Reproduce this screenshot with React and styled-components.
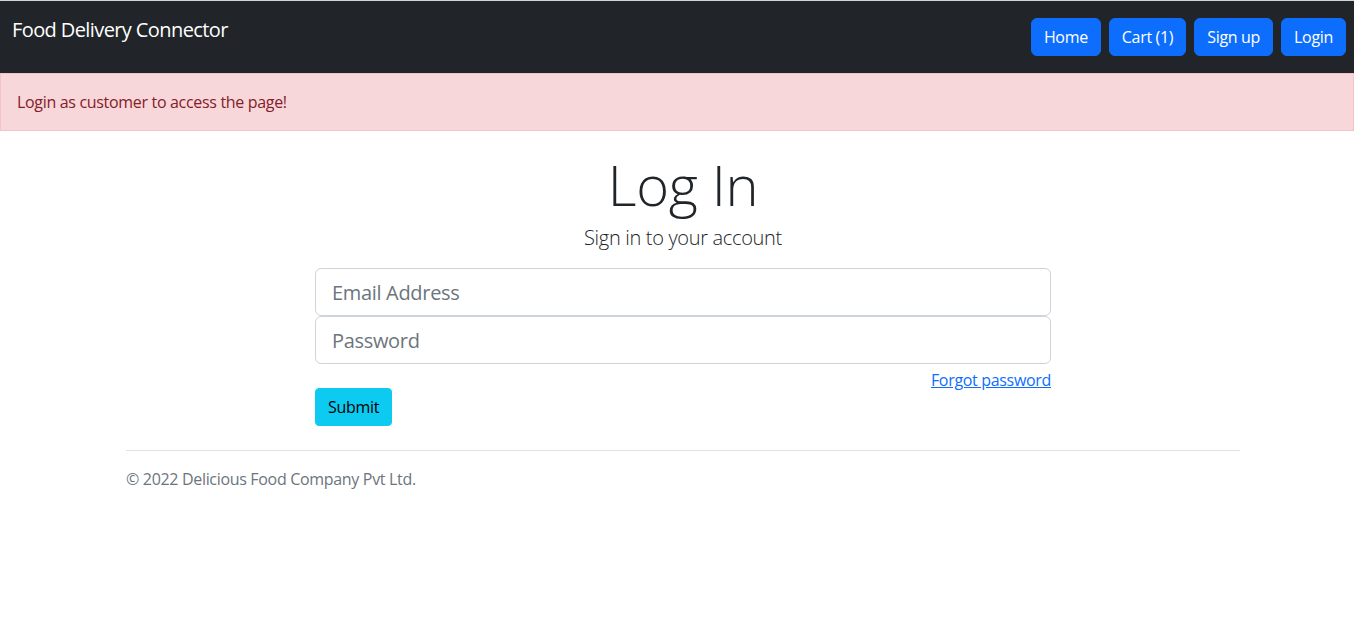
import React from "react";
import styled, { createGlobalStyle } from "styled-components";

const GlobalStyle = createGlobalStyle`
  body {
    margin: 0;
    font-family: "Open Sans", "Noto Sans", sans-serif;
    letter-spacing: -0.02em;
    color: #212529;
    background: #fff;
    border-top: 1px solid #d4d4d4;
  }
  * { box-sizing: border-box; }
`;

const Navbar = styled.nav`
  background-color: #212529;
  height: 72px;
  display: flex;
  justify-content: space-between;
  align-items: flex-start;
  padding: 0 8px 0 12px;
`;

const Brand = styled.a`
  color: #fff;
  font-size: 20px;
  line-height: 30px;
  margin-top: 14px;
  letter-spacing: -0.03em;
  text-decoration: none;
`;

const NavButtons = styled.div`
  display: flex;
  gap: 8px;
  margin-top: 17px;
`;

const NavButton = styled.button`
  background-color: #0d6efd;
  color: #fff;
  border: 1px solid #0d6efd;
  border-radius: 6px;
  font-family: inherit;
  letter-spacing: inherit;
  font-size: 16px;
  line-height: 24px;
  padding: 6px 12px;
`;

const Alert = styled.div`
  background-color: #f8d7da;
  border: 1px solid #f5c2c7;
  color: #842029;
  padding: 16px;
  font-size: 16px;
  line-height: 24px;
`;

const Main = styled.main`
  display: flex;
  flex-direction: column;
  align-items: center;
  padding: 20px 0 0 12px;
`;

const Title = styled.h1`
  font-size: 56px;
  font-weight: 300;
  line-height: 67px;
  margin: 0 0 5px;
`;

const Lead = styled.p`
  font-size: 20px;
  font-weight: 300;
  line-height: 30px;
  margin: 0 0 15px;
`;

const Form = styled.form`
  width: 736px;
  display: flex;
  flex-direction: column;
`;

const Input = styled.input`
  width: 100%;
  height: 48px;
  font-family: inherit;
  letter-spacing: inherit;
  font-size: 20px;
  padding: 8px 16px;
  border: 1px solid #ced4da;
  border-radius: 6px;
  color: #212529;
  &::placeholder { color: #6c757d; }
`;

const ForgotRow = styled.div`
  display: flex;
  justify-content: flex-end;
  margin-top: 8px;
`;

const Link = styled.a`
  color: #0d6efd;
  font-size: 16px;
  line-height: 16px;
  text-decoration: underline;
`;

const Submit = styled.button`
  align-self: flex-start;
  background-color: #0dcaf0;
  border: 1px solid #0dcaf0;
  border-radius: 4px;
  color: #000;
  font-family: inherit;
  letter-spacing: inherit;
  font-size: 16px;
  line-height: 24px;
  padding: 6px 12px;
`;

const Footer = styled.footer`
  width: 1114px;
  margin: 24px 0 0 calc(50% - 551px);
  border-top: 1px solid #dee2e6;
  padding-top: 16px;
  color: #6c757d;
  font-size: 16px;
  line-height: 24px;
`;

export default function App() {
  return (
    <>
      <GlobalStyle />
      <Navbar>
        <Brand href="#">Food Delivery Connector</Brand>
        <NavButtons>
          <NavButton>Home</NavButton>
          <NavButton>Cart (1)</NavButton>
          <NavButton>Sign up</NavButton>
          <NavButton>Login</NavButton>
        </NavButtons>
      </Navbar>
      <Alert>Login as customer to access the page!</Alert>
      <Main>
        <Title>Log In</Title>
        <Lead>Sign in to your account</Lead>
        <Form onSubmit={(e) => e.preventDefault()}>
          <Input type="email" placeholder="Email Address" />
          <Input type="password" placeholder="Password" />
          <ForgotRow>
            <Link href="#">Forgot password</Link>
          </ForgotRow>
          <Submit type="submit">Submit</Submit>
        </Form>
      </Main>
      <Footer>© 2022 Delicious Food Company Pvt Ltd.</Footer>
    </>
  );
}
